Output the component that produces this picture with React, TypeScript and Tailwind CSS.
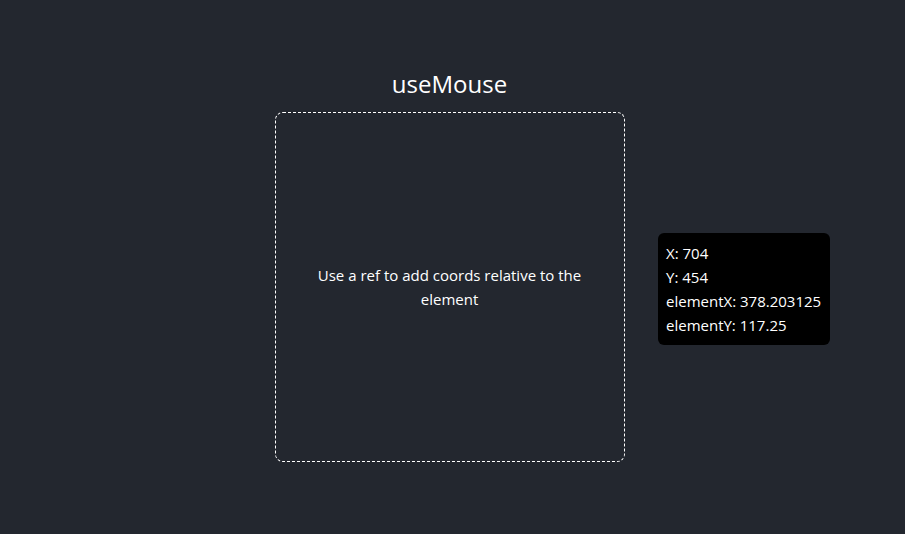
import React from 'react';

export default function App() {
  return (
    <div
      className="relative min-h-screen w-full bg-[#23272f] text-white flex flex-col items-center pt-[68px] pr-[6px]"
      style={{ fontFamily: '"Open Sans", "Noto Sans", sans-serif' }}
    >
      <h1 className="text-[24px] leading-[32px] mb-[12px]">useMouse</h1>
      <div className="w-[350px] h-[350px] border border-dashed border-white rounded-lg flex items-center justify-center text-center px-10 text-[15px] leading-6">
        Use a ref to add coords relative to the element
      </div>

      {/* tooltip following the cursor */}
      <div className="absolute left-[658px] top-[233px] w-[172px] bg-black rounded-md px-2 py-2 text-[15px] leading-6">
        <div>X: 704</div>
        <div>Y: 454</div>
        <div>elementX: 378.203125</div>
        <div>elementY: 117.25</div>
      </div>
    </div>
  );
}
